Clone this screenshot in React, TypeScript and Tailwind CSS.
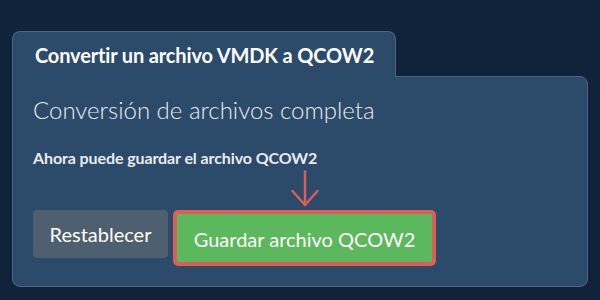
import React from 'react';

const font = { fontFamily: 'Lato, "Open Sans", sans-serif' };

export default function App() {
  return (
    <div className="w-[600px] h-[300px] bg-[#11233a] pt-[31px] pl-[12px]" style={font}>
      <div className="flex flex-col w-[576px]">
        <div className="relative z-10 -mb-px w-[384px] h-[46px] pl-[22px] pt-[11px] bg-[#2c4a6a] border border-b-0 border-[#4b6584] rounded-t-lg">
          <h2 className="text-[20px] font-bold text-white leading-[24px] tracking-[-0.15px]">Convertir un archivo VMDK a QCOW2</h2>
        </div>
        <div className="h-[211px] bg-[#2c4a6a] border border-[#4b6584] rounded-b-lg rounded-tr-lg px-[20px] pt-[18px]">
          <h3 className="text-[24px] font-light text-[#e8ecf0] leading-[30px]">Conversión de archivos completa</h3>
          <p className="mt-[23px] text-[16px] font-bold text-[#e8ecf0] leading-[20px] tracking-[-0.1px]">Ahora puede guardar el archivo QCOW2</p>
          <div className="mt-[42px] flex items-start gap-[5px]">
            <button className="h-[48px] w-[135px] rounded-[4px] bg-[#4e5f70] text-white text-[20px] leading-none">
              Restablecer
            </button>
            <div className="relative">
              {/* annotation arrow pointing at the save button */}
              <svg className="absolute bottom-full left-1/2 -translate-x-1/2 mb-[3px]" width="30" height="37" viewBox="0 0 30 37" fill="none" stroke="#dc5e59" strokeWidth="2.5" strokeLinecap="round" strokeLinejoin="round">
                <path d="M15 1.5 V35" />
                <path d="M2.5 21 L15 35 L27.5 21" />
              </svg>
              <button className="h-[56px] w-[263px] rounded-[5px] border-[4px] border-[#dc5e59] bg-[#5cb85c] text-white text-[20px] leading-none pt-[2px]">
                Guardar archivo QCOW2
              </button>
            </div>
          </div>
        </div>
      </div>
    </div>
  );
}
